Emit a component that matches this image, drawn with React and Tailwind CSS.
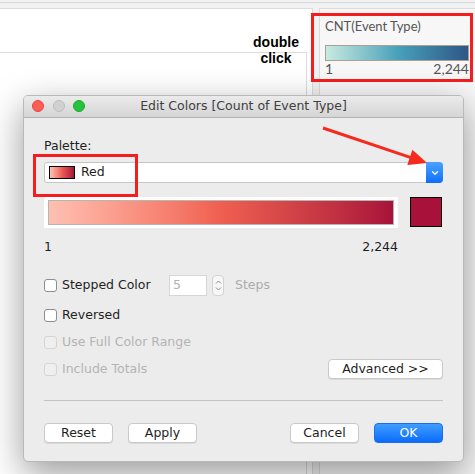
import { ChevronDown } from 'lucide-react';

// ── Helpers ───────────────────────────────────────────────────────────────────

const UI = { fontFamily: '"DejaVu Sans", "Liberation Sans", sans-serif' };
const TAB = { fontFamily: 'Lato, "Noto Sans", sans-serif' };

function Checkbox({ label, disabled }) {
  return (
    <div className="flex items-center">
      <span
        className={`w-[13px] h-[13px] rounded-[3px] border ${
          disabled ? 'border-[#d4d4d4] bg-[#efefef]' : 'border-[#8e8e8e] bg-white'
        }`}
      />
      <span className={`ml-[5px] text-[12.5px] ${disabled ? 'text-[#b4b4b4]' : 'text-[#1e1e1e]'}`}>
        {label}
      </span>
    </div>
  );
}

function Button({ children, primary, className = '' }) {
  return (
    <button
      className={`h-[20px] w-[69px] rounded-[4px] text-[12.5px] leading-none ${
        primary
          ? 'bg-gradient-to-b from-[#3f9dff] to-[#0a6bfd] text-white border border-[#1a6fe6]'
          : 'bg-white text-[#1e1e1e] border border-[#c9c9c9] shadow-[0_1px_0_rgba(0,0,0,0.08)]'
      } ${className}`}
    >
      {children}
    </button>
  );
}

// ── Dialog ────────────────────────────────────────────────────────────────────

function EditColors() {
  return (
    <div
      style={UI}
      className="absolute left-[23px] top-[95px] w-[441px] rounded-[5px] bg-[#ececec] border border-[#b9b9b9] shadow-[0_12px_36px_rgba(0,0,0,0.4)] overflow-hidden"
    >
      {/* title bar */}
      <div className="relative h-[22px] flex items-center justify-center bg-gradient-to-b from-[#ebebeb] to-[#d5d5d5] border-b border-[#b3b3b3]">
        <div className="absolute left-[8px] top-[4px] flex gap-[8.5px]">
          <span className="w-[12px] h-[12px] rounded-full bg-[#fd5f57] border border-[#e2463f]" />
          <span className="w-[12px] h-[12px] rounded-full bg-[#d1d1d1] border border-[#bdbdbd]" />
          <span className="w-[12px] h-[12px] rounded-full bg-[#27c33f] border border-[#1aab2d]" />
        </div>
        <span className="text-[12.5px] text-[#404040]">Edit Colors [Count of Event Type]</span>
      </div>

      <div className="px-[20px] pt-[20px] pb-[18px]">
        <p className="h-[16px] leading-[16px] text-[12.5px] text-[#1e1e1e]">Palette:</p>

        {/* palette select */}
        <div className="mt-[8px] h-[21px] flex bg-white border border-[#c6c6c6] rounded-[3px]">
          <div className="flex-1 flex items-center pl-[4px]">
            <span className="w-[26px] h-[13px] border border-black bg-gradient-to-r from-[#fdc3b8] via-[#ec5a55] to-[#a8123a]" />
            <span className="ml-[6px] text-[12.5px] text-[#1e1e1e]">Red</span>
          </div>
          <div className="w-[17px] -my-px -mr-px rounded-r-[4px] bg-gradient-to-b from-[#4aa2ff] to-[#0b6efd] flex items-center justify-center">
            <ChevronDown size={10} strokeWidth={3} color="white" />
          </div>
        </div>

        {/* gradient preview */}
        <div className="mt-[14px] h-[31px] flex">
          <div className="w-[354px] bg-white px-[4px] py-[3px]">
            <div className="h-full border border-[#b5b5b5] bg-gradient-to-r from-[#fec0b2] via-[#ef5f50] to-[#a8123a]" />
          </div>
          <div className="ml-[12px] w-[32px] h-[30px] bg-[#a8123a] border border-black" />
        </div>

        <div className="mt-[11px] w-[354px] h-[16px] flex justify-between text-[12.5px] leading-[16px] text-[#1e1e1e]">
          <span>1</span>
          <span>2,244</span>
        </div>

        {/* options */}
        <div className="mt-[20px] h-[21px] flex items-center">
          <div className="w-[125px]">
            <Checkbox label="Stepped Color" />
          </div>
          <div className="w-[38px] h-[21px] bg-white border border-[#d6d6d6] flex items-center pl-[3px] text-[12.5px] text-[#b2b2b2]">
            5
          </div>
          <div className="ml-[5px] w-[12px] h-[21px] rounded-[4px] border border-[#d2d2d2] bg-[#f7f7f7] flex flex-col items-center justify-center">
            <svg width="7" height="13" viewBox="0 0 7 13" fill="none" stroke="#8a8a8a" strokeWidth="1">
              <path d="M1 4.5 L3.5 2 L6 4.5" />
              <path d="M1 8.5 L3.5 11 L6 8.5" />
            </svg>
          </div>
          <span className="ml-[11px] text-[12.5px] text-[#ababab]">Steps</span>
        </div>

        <div className="mt-[11px] h-[16px] flex items-center">
          <Checkbox label="Reversed" />
        </div>
        <div className="mt-[11px] h-[16px] flex items-center">
          <Checkbox label="Use Full Color Range" disabled />
        </div>
        <div className="mt-[9px] h-[20px] flex items-center justify-between">
          <Checkbox label="Include Totals" disabled />
          <Button className="w-[115px]">Advanced &gt;&gt;</Button>
        </div>

        <div className="mt-[21px] h-px bg-[#c4c4c4]" />

        <div className="mt-[22px] flex items-center">
          <Button>Reset</Button>
          <Button className="ml-[15px]">Apply</Button>
          <Button className="ml-auto">Cancel</Button>
          <Button primary className="ml-[15px]">OK</Button>
        </div>
      </div>
    </div>
  );
}

// ── Page ──────────────────────────────────────────────────────────────────────

export default function App() {
  return (
    <div className="relative w-[475px] h-[474px] overflow-hidden bg-[#f2f2f2]">
      {/* top strip */}
      <div className="h-[2px]" />
      <div className="h-px bg-[#d9d9d9]" />
      <div className="h-[5px]" />

      <div className="flex h-[466px]">
        {/* sheet area */}
        <div className="w-[313px] bg-white border-t border-r border-[#dcdcdc]">
          <div className="mt-[43px] mr-[5px] h-full border-t border-r border-[#dcdcdc]" />
        </div>

        {/* legend */}
        <div style={TAB} className="ml-[6px] flex-1 bg-[#f7f7f7] border-t border-l border-[#dcdcdc] pl-[5px] pr-[6px]">
          <p className="mt-[8px] text-[13px] text-[#555]">CNT(Event Type)</p>
          <div className="mt-[8px] h-[16px] border border-[#a99f92] bg-gradient-to-r from-[#c8eadf] via-[#48a2ba] to-[#2e5785]" />
          <div className="flex justify-between text-[14px] leading-[16px] text-[#555]">
            <span>1</span>
            <span>2,244</span>
          </div>
        </div>
      </div>

      {/* annotation */}
      <div
        style={{ fontFamily: '"Liberation Sans", Arial, sans-serif' }}
        className="absolute left-[246px] top-[34px] w-[60px] text-center text-[14px] leading-[16px] font-bold text-black"
      >
        double
        <br />
        click
      </div>
      <div className="absolute left-[311px] top-[13px] w-[162px] h-[69px] border-[3px] border-[#f51d1d]" />

      <EditColors />

      <div className="absolute left-[33px] top-[154px] w-[105px] h-[43px] border-[3px] border-[#f51d1d]" />
      <svg className="absolute left-0 top-0" width="475" height="474">
        <line x1="323" y1="128" x2="411" y2="157.6" stroke="#f52a1f" strokeWidth="3" />
        <polygon points="427,163 412.4,149.7 407.3,164.9" fill="#f52a1f" />
      </svg>
    </div>
  );
}
